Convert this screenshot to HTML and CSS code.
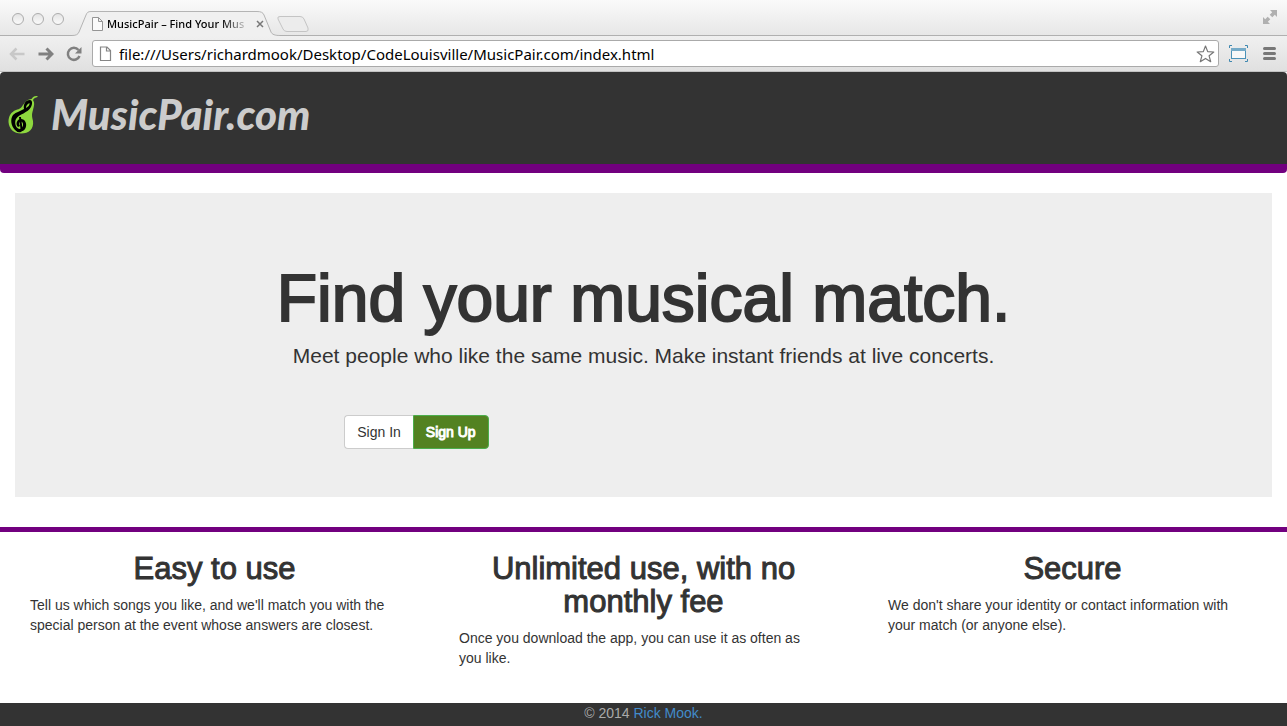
FILE: index.html
```html
<!DOCTYPE html>
<html lang="en">
<head>
<meta charset="utf-8">
<title>MusicPair – Find Your Musical Match</title>
<link rel="stylesheet" href="styles.css">
</head>
<body>
<div class="browser">
  <div class="tabstrip">
    <div class="lights">
      <button class="light" aria-label="Close window"></button>
      <button class="light" aria-label="Minimize window"></button>
      <button class="light" aria-label="Zoom window"></button>
    </div>
    <div class="tab">
      <svg class="tab-shape" width="208" height="25" viewBox="0 0 208 25" aria-hidden="true">
        <path d="M0 24.500C4 24.500 6 23.500 7 21L14 4C15 1.500 16 .5 19 .5H185C189 .5 191 1.500 192 4L199 21C200 23.500 203 24.500 208 24.500V25H0Z" fill="#f0f0f0"/>
        <path d="M0 24.500C4 24.500 6 23.500 7 21L14 4C15 1.500 16 .5 19 .5H185C189 .5 191 1.500 192 4L199 21C200 23.500 203 24.500 208 24.500" fill="none" stroke="#b4b4b4"/>
      </svg>
      <svg class="tab-page" width="11" height="14" viewBox="0 0 11 14" aria-hidden="true"><path d="M.5.500H6.500L10.500 4.500V13.500H.5ZM6.500.500V4.500H10.500" fill="#fafafa" stroke="#959595"/></svg>
      <span class="tab-title">MusicPair – Find Your Mus</span>
      <button class="tab-close" aria-label="Close tab"><svg width="8" height="8" viewBox="0 0 8 8"><path d="M1 1L7 7M7 1L1 7" stroke="#777" stroke-width="1.500"/></svg></button>
    </div>
    <button class="new-tab" aria-label="New tab"><svg width="34" height="18" viewBox="0 0 34 18"><path d="M4 1.500H24Q27 1.500 28 4L32 13Q33 16.500 30 16.500H11Q8 16.500 7 14L2 4Q1 1.500 4 1.500Z" fill="#ececec" stroke="#c4c4c4"/></svg></button>
    <button class="fullscreen" aria-label="Full screen"><svg width="16" height="16" viewBox="0 0 16 16" fill="#b0b0b0"><path d="M8 1H15V8L12.800 5.800L10.300 8.300L7.700 5.700L10.200 3.200ZM1 8L3.200 10.200L5.700 7.700L8.300 10.300L5.800 12.800L8 15H1Z"/></svg></button>
  </div>
  <div class="toolbar">
    <button class="tool back" aria-label="Back"><svg width="16" height="14" viewBox="0 0 16 14"><path d="M15.500 7H2M7.500 1.500L2 7L7.500 12.500" fill="none" stroke="#c8c8c8" stroke-width="2.500"/></svg></button>
    <button class="tool forward" aria-label="Forward"><svg width="16" height="14" viewBox="0 0 16 14"><path d="M.5 7H14M8.500 1.500L14 7L8.500 12.500" fill="none" stroke="#808080" stroke-width="3"/></svg></button>
    <button class="tool reload" aria-label="Reload"><svg width="16" height="16" viewBox="0 0 16 16"><path d="M12.500 4A6 6 0 1 0 13.500 10" fill="none" stroke="#808080" stroke-width="2.500"/><path d="M15.500 1V7.500H9Z" fill="#808080"/></svg></button>
    <div class="omnibox">
      <svg width="13" height="16" viewBox="0 0 13 16" aria-hidden="true"><path d="M1.500 1H8L11.500 4.500V14.500H1.500ZM7.500 1V5H11.500" fill="#fff" stroke="#858585" stroke-width="1.200"/></svg>
      <input class="url" type="text" aria-label="Address" value="file:///Users/richardmook/Desktop/CodeLouisville/MusicPair.com/index.html">
      <button class="tool" aria-label="Bookmark"><svg width="19" height="18" viewBox="0 0 19 18"><path d="M9.500 1L11.700 6.600L17.800 7L13.100 10.800L14.700 16.700L9.500 13.400L4.300 16.700L5.900 10.800L1.200 7L7.300 6.600Z" fill="#fff" stroke="#777" stroke-width="1.200" stroke-linejoin="round"/></svg></button>
    </div>
    <button class="tool resizer" aria-label="Window resizer"><svg width="19" height="17" viewBox="0 0 19 17"><rect x="2.500" y="3.500" width="14" height="10" fill="#f8f8f8" stroke="#4b92b8"/><path d="M2 3H17V6H2Z" fill="#76abc8"/><path d="M.5 3V.5H3M16 .5H18.500V3M.5 14V16.500H3M16 16.500H18.500V14" fill="none" stroke="#3f88b0"/></svg></button>
    <button class="tool menu" aria-label="Menu"><svg width="13" height="13" viewBox="0 0 13 13"><path d="M1.500 1.500H11.500M1.500 6.500H11.500M1.500 11.500H11.500" stroke="#777" stroke-width="3" stroke-linecap="round"/></svg></button>
  </div>
</div>

<div class="page">
  <header class="masthead">
    <a class="brand" href="#">
      <svg class="pear" width="30" height="39" viewBox="0 0 30 39" aria-hidden="true">
        <path d="M29.500 1C26 .5 24.500 2 23.500 4C20 4 17.500 6 15 10C13 13 12 14 8 15C3 17 .5 21 .5 27C1 34 6 38.500 13 38.500C21 38.500 26 34 25 26C24 21 23.500 20 25 15C26 11 27 8 25 5C26 3 27.500 2.500 29.500 2Z" fill="#8ed83e"/>
        <path d="M22 5C17 5 15 10 16 14C13 16 8 17 5 20C2 24 3 31 7 35C10 38 15 37 17 34C20 29 17 24 13 24C9 24 7 29 10 32L12 31C10 28 12 26 14 27C16 29 15 33 12 34C8 34 6 28 8 24C11 19 20 18 23 12C25 8 24 5 22 5ZM21.500 8C22 10 20 12 18 13C18 11 19 9 21.500 8Z" fill="#000" fill-rule="evenodd"/>
        <path d="M12 22L13.500 34C13 37 9 37 9 34" fill="none" stroke="#000" stroke-width="2"/>
      </svg>
      <span>MusicPair.com</span>
    </a>
  </header>

  <main>
    <section class="hero">
      <h1>Find your musical match.</h1>
      <p>Meet people who like the same music. Make instant friends at live concerts.</p>
      <div class="hero-actions">
        <button class="btn sign-in">Sign In</button><button class="btn sign-up">Sign Up</button>
      </div>
    </section>
    <section class="features">
      <article class="feature">
        <h2>Easy to use</h2>
        <p>Tell us which songs you like, and we'll match you with the special person at the event whose answers are closest.</p>
      </article>
      <article class="feature">
        <h2>Unlimited use, with no monthly fee</h2>
        <p>Once you download the app, you can use it as often as you&nbsp;like.</p>
      </article>
      <article class="feature">
        <h2>Secure</h2>
        <p>We don't share your identity or contact information with your match (or anyone else).</p>
      </article>
    </section>
  </main>

  <footer class="footer">© 2014 <a href="#">Rick Mook.</a></footer>
</div>
</body>
</html>
```

FILE: styles.css
```css
* { box-sizing: border-box; }

body {
  margin: 0;
  min-height: 100vh;
  display: flex;
  flex-direction: column;
  background: #fff;
  color: #333;
  font: 14px/20px "Liberation Sans", Arial, sans-serif;
}

button {
  padding: 0;
  border: 0;
  background: none;
  font: inherit;
  color: inherit;
}

svg { display: block; }

/* Browser window */
.browser { font-family: "Noto Sans", sans-serif; }

.tabstrip {
  display: flex;
  align-items: flex-end;
  height: 36px;
  padding: 2px 9px 0 12px;
  background: linear-gradient(#fafafa, #e7e7e7);
  border-bottom: 1px solid #b0b0b0;
}

.lights {
  display: flex;
  align-self: center;
  gap: 8px;
  width: 60px;
}

.light {
  width: 12px;
  height: 12px;
  border: 1px solid #acacac;
  border-radius: 50%;
  background: linear-gradient(#e4e4e4, #fafafa);
}

.tab {
  position: relative;
  display: flex;
  align-items: center;
  width: 208px;
  height: 25px;
  padding: 0 16px 0 20px;
  margin-bottom: -1px;
}

.tab-shape {
  position: absolute;
  inset: 0;
}

.tab-page,
.tab-title,
.tab-close { position: relative; }

.tab-title {
  width: 143px;
  margin-left: 4px;
  white-space: nowrap;
  color: #000;
  font-size: 11px;
  font-weight: 500;
  mask-image: linear-gradient(90deg, #000 80%, transparent);
}

.tab-close { margin-left: 6px; }

.new-tab { margin: 0 auto 2px -4px; }

.fullscreen {
  align-self: center;
  margin-bottom: 4px;
}

.toolbar {
  display: flex;
  align-items: center;
  height: 36px;
  padding: 0 11px 0 9px;
  background: linear-gradient(#f0f0f0, #e0e0e0);
  border-bottom: 1px solid #c2c2c2;
}

.forward { margin-left: 13px; }
.reload { margin-left: 12px; }
.resizer { margin-left: 10px; }
.menu { margin-left: 15px; }

.omnibox {
  flex: 1;
  display: flex;
  align-items: center;
  height: 27px;
  margin-left: 10px;
  padding: 0 3px 0 6px;
  border: 1px solid #aaa;
  border-radius: 3px;
  background: #fff;
}

.url {
  flex: 1;
  min-width: 0;
  height: 24px;
  margin-left: 7px;
  padding: 0;
  border: 0;
  outline: 0;
  background: none;
  color: #000;
  font: 15px/24px "Noto Sans", sans-serif;
}

/* Page */
.page {
  flex: 1;
  display: flex;
  flex-direction: column;
}

.masthead {
  display: flex;
  padding: 20px 8px 28px;
  background: #333;
  border-bottom: 9px solid #72007f;
  border-radius: 4px;
}

.brand {
  display: flex;
  align-items: center;
  gap: 13px;
  color: #ccc;
  font: italic 900 42px/44px Lato, sans-serif;
  text-decoration: none;
}

.hero {
  margin: 20px 15px 30px;
  padding: 70px 0 48px;
  background: #eee;
}

.hero h1,
.hero p {
  margin: 0;
  text-align: center;
}

.hero h1 {
  font-size: 66px;
  font-weight: 400;
  line-height: 70px;
  -webkit-text-stroke: 2px #333;
}

.hero p {
  margin-top: 8px;
  font-size: 21px;
  line-height: 30px;
}

.hero-actions {
  display: flex;
  margin: 44px 0 0 25%;
  padding-left: 15px;
}

.btn {
  height: 34px;
  padding: 0 12px;
  border: 1px solid #ccc;
  line-height: 20px;
}

.sign-in {
  border-right: 0;
  border-radius: 4px 0 0 4px;
  background: #fff;
}

.sign-up {
  border-color: #4cae4c;
  border-radius: 0 4px 4px 0;
  background: #538221;
  color: #fff;
  -webkit-text-stroke: 1px #fff;
}

.features {
  display: grid;
  grid-template-columns: repeat(3, 1fr);
  padding: 20px 0 35px;
  border-top: 5px solid #72007f;
}

.feature { padding: 0 30px; }

.feature h2 {
  margin: 0 0 10px;
  font-size: 31px;
  font-weight: 400;
  line-height: 33px;
  text-align: center;
  -webkit-text-stroke: 1px #333;
}

.feature p { margin: 0; }

.footer {
  flex: 1;
  background: #333;
  color: #aaa;
  text-align: center;
}

.footer a {
  color: #428bca;
  text-decoration: none;
}
```
